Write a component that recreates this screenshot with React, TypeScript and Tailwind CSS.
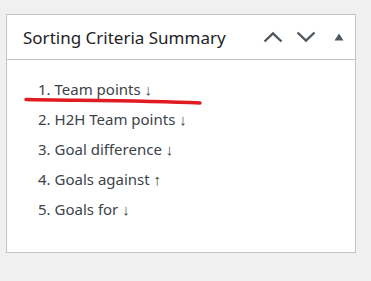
import React from "react"

const criteria = [
  { label: "Team points", dir: "↓" },
  { label: "H2H Team points", dir: "↓" },
  { label: "Goal difference", dir: "↓" },
  { label: "Goals against", dir: "↑" },
  { label: "Goals for", dir: "↓" },
]

const ChevronUp = () => (
  <svg width="20" height="12" viewBox="0 0 20 12" fill="none">
    <path d="M1.5 10.5 L10 2.5 L18.5 10.5" stroke="#50575e" strokeWidth="2.4" />
  </svg>
)

const ChevronDown = () => (
  <svg width="20" height="12" viewBox="0 0 20 12" fill="none">
    <path d="M1.5 1.5 L10 9.5 L18.5 1.5" stroke="#50575e" strokeWidth="2.4" />
  </svg>
)

const Triangle = () => (
  <svg width="10" height="8" viewBox="0 0 10 8">
    <path d="M0.5 7.5 L5 0.5 L9.5 7.5 Z" fill="#50575e" />
  </svg>
)

export default function App() {
  return (
    <div className="w-[371px] h-[281px] bg-[#f0f0f1] pt-[14px] pl-[6px]" style={{ fontFamily: '"Noto Sans", "Open Sans", sans-serif' }}>
      <div className="w-[350px] h-[239px] bg-white border border-[#c3c4c7] flex flex-col">
        <div className="h-[45px] flex items-center border-b border-[#c3c4c7] pl-4">
          <h2 className="flex-1 text-[17px] text-[#1d2327] leading-none">Sorting Criteria Summary</h2>
          <div className="flex items-center pl-[1px]">
            <span className="w-[33px] flex justify-center"><ChevronUp /></span>
            <span className="w-[33px] flex justify-center"><ChevronDown /></span>
            <span className="w-[33px] flex justify-center"><Triangle /></span>
          </div>
        </div>
        <div className="relative pt-[14px] pl-[31px]">
          <ol className="text-[15px] leading-[30px] text-[#3c434a]">
            {criteria.map((c, i) => (
              <li key={c.label}>
                {i + 1}. {c.label} {c.dir}
              </li>
            ))}
          </ol>
          <svg className="absolute left-[17px] top-[37px]" width="180" height="9" viewBox="0 0 180 9" fill="none">
            <path d="M2 2.5 C 50 3.5, 120 3.5, 176 6" stroke="#e11b22" strokeWidth="3.5" strokeLinecap="round" />
          </svg>
        </div>
      </div>
    </div>
  )
}
